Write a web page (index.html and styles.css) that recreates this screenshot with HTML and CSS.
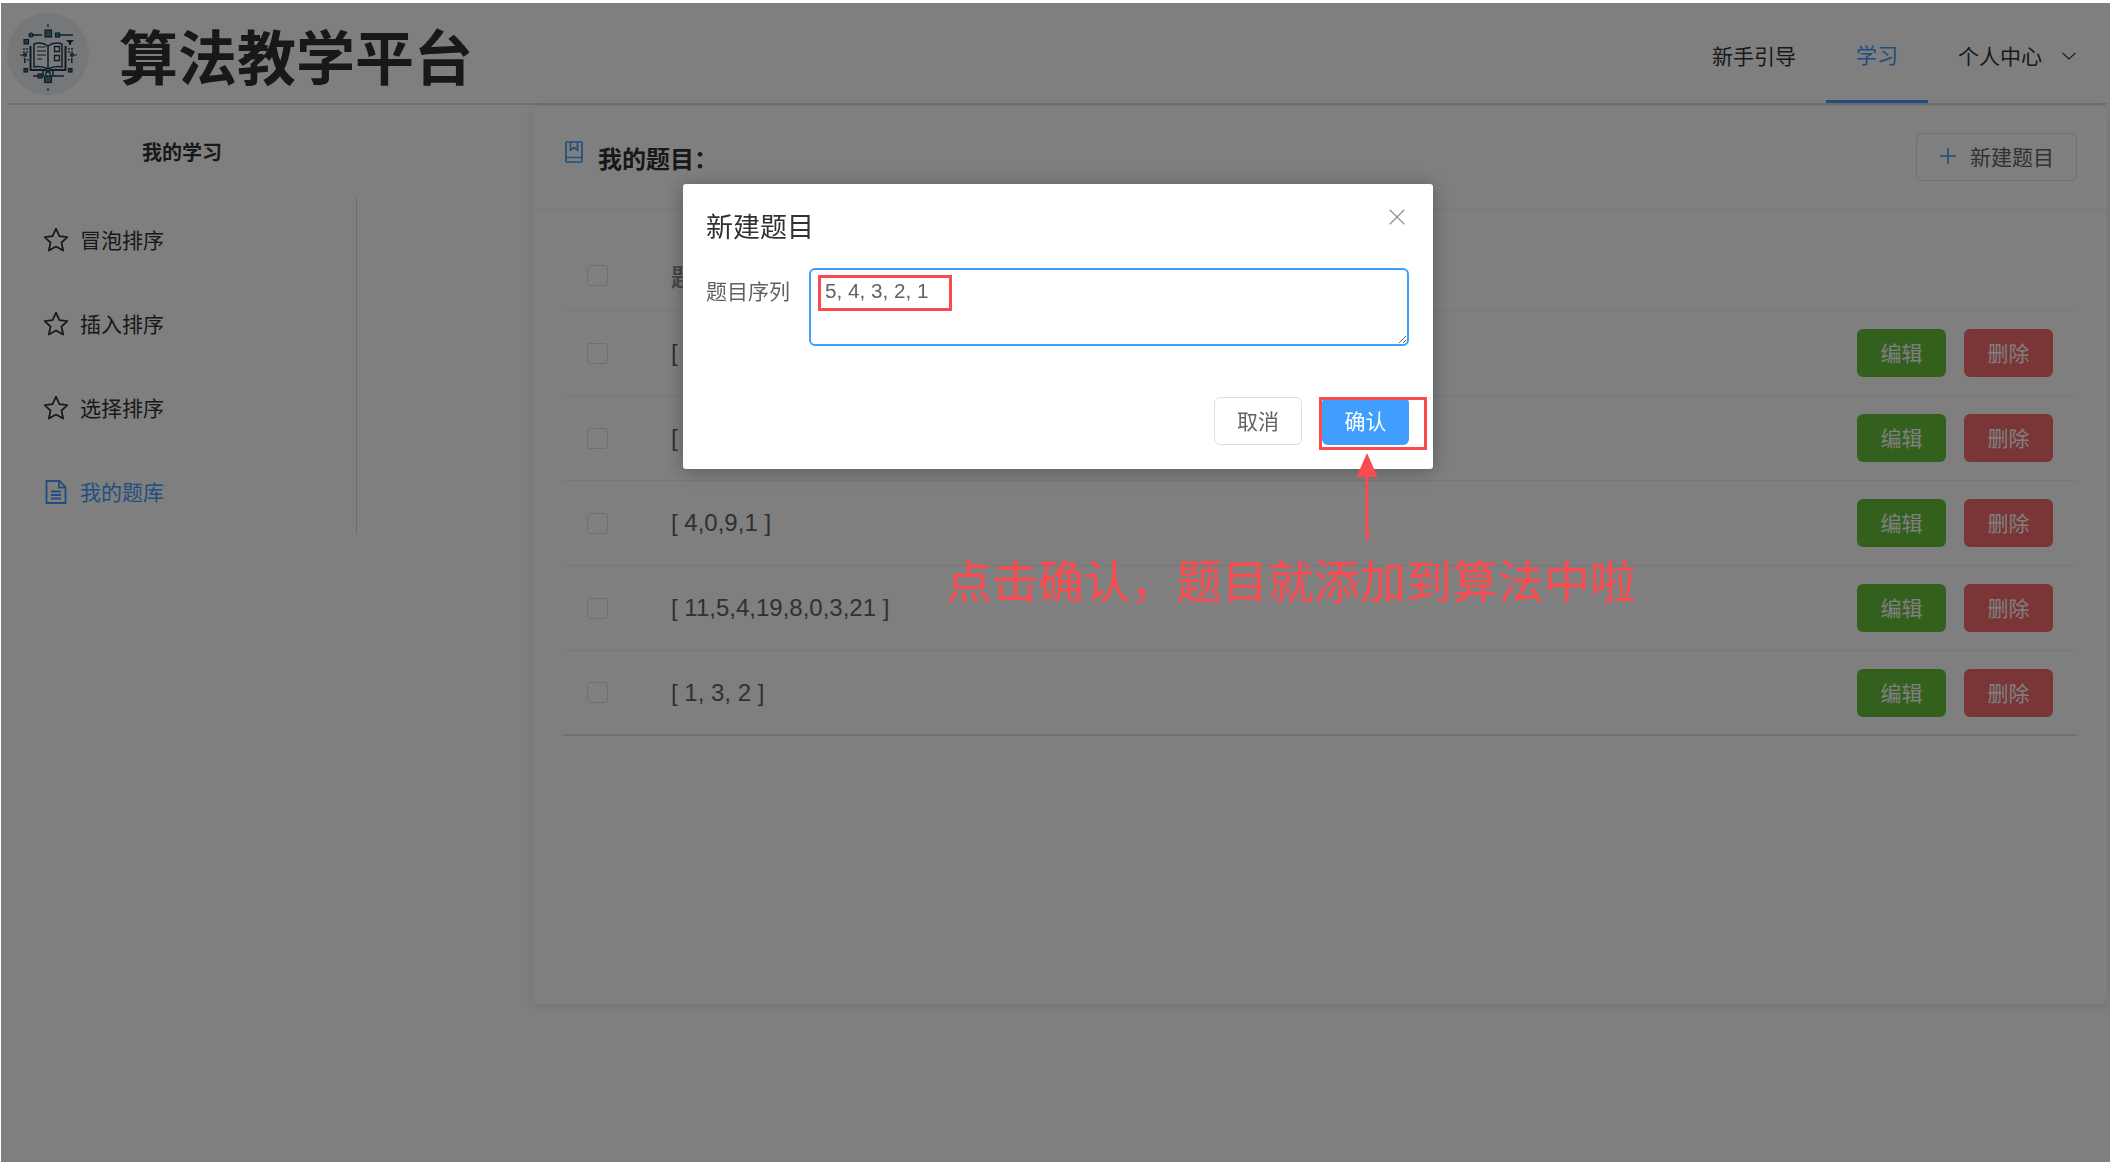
FILE: index.html
```html
<!DOCTYPE html>
<html lang="zh">
<head>
<meta charset="utf-8">
<title>算法教学平台</title>
<link rel="stylesheet" href="styles.css">
</head>
<body>
<div class="page">
  <header class="topbar">
    <div class="brand">
      <div class="logo">
        <svg viewBox="0 0 82 82" width="82" height="82" fill="none">
          <g stroke="#1c3a4c" stroke-width="1.5">
            <path d="M27 31c5-2 10-1 14 2 4-3 9-4 14-2v23c-5-1-10 0-14 2-4-2-9-3-14-2z" fill="#f4f6f7"/>
            <path d="M41 33v23"/>
            <path d="M23.500 33v24h14.500l3 1.500 3-1.500h14.500V33" stroke-width="2"/>
            <path d="M30 34h9M30 38h9M30 42h9M30 46h5" stroke-width="1.200"/>
            <path d="M47.500 33.500h5v5h-5zM47.500 42.500h5v5h-5z" stroke-width="1.300"/>
            <path d="M36 58v5h-10M46 58v5h11M26 22h9M53 22h13"/>
            <path d="M41 11v3M41 75v3M18 35h0M13 42h3M67 42h3" stroke-width="1.200"/>
          </g>
          <g fill="#3a7f9f" stroke="#1c3a4c" stroke-width="1.200">
            <rect x="38" y="17" width="6.500" height="7"/>
            <rect x="17" y="26.500" width="4.500" height="4.500"/>
            <rect x="48.500" y="20" width="4" height="4"/>
            <rect x="37.500" y="63" width="7" height="6.500"/>
            <rect x="31" y="61" width="4" height="4"/>
            <circle cx="24" cy="22" r="2"/>
            <rect x="17" y="55.500" width="3.500" height="3.500"/>
            <rect x="61.500" y="55.500" width="3.500" height="3.500"/>
            <circle cx="18" cy="42" r="1.500"/>
            <circle cx="65" cy="42" r="1.500"/>
          </g>
          <path d="M59 27h8l-3 3v2h-2v-2z" fill="#1c3a4c"/>
          <path d="M38.800 63v-2a2.200 2.200 0 0 1 4.400 0v2" stroke="#1c3a4c" stroke-width="1.200" fill="none"/>
          <g fill="#1c3a4c">
            <circle cx="17" cy="36" r=".9"/><circle cx="20" cy="36" r=".9"/><circle cx="17" cy="39" r=".9"/><circle cx="20" cy="39" r=".9"/>
            <circle cx="62" cy="36" r=".9"/><circle cx="65" cy="36" r=".9"/><circle cx="62" cy="39" r=".9"/><circle cx="65" cy="39" r=".9"/>
            <rect x="17" y="45" width="1.500" height="5"/><rect x="20" y="46" width="1.500" height="1.500"/>
            <rect x="64" y="45" width="1.500" height="5"/><rect x="61" y="46" width="1.500" height="1.500"/>
          </g>
        </svg>
      </div>
      <h1 class="site-title">算法教学平台</h1>
    </div>
    <nav class="nav">
      <a class="nav-item">新手引导</a>
      <a class="nav-item nav-active">学习</a>
      <a class="nav-item nav-user">个人中心
        <svg class="chevron" viewBox="0 0 14 8" width="14" height="8" fill="none"><path d="M.5.8 7 7 13.500.8" stroke="#2a2a2a" stroke-width="1.100"/></svg>
      </a>
    </nav>
  </header>

  <div class="content">
    <aside class="sidebar">
      <h2 class="side-title">我的学习</h2>
      <ul class="menu">
        <li class="menu-item">
          <svg class="menu-icon" viewBox="1 1 22 22" width="24" height="24" fill="none"><path d="M12 1.600l3.100 6.900 7.500.8-5.600 5 1.600 7.400-6.600-3.800-6.600 3.800L7 14.300l-5.600-5 7.500-.8z" stroke="currentColor" stroke-width="1.600" stroke-linejoin="round"/></svg>
          冒泡排序
        </li>
        <li class="menu-item">
          <svg class="menu-icon" viewBox="1 1 22 22" width="24" height="24" fill="none"><path d="M12 1.600l3.100 6.900 7.500.8-5.600 5 1.600 7.400-6.600-3.800-6.600 3.800L7 14.300l-5.600-5 7.500-.8z" stroke="currentColor" stroke-width="1.600" stroke-linejoin="round"/></svg>
          插入排序
        </li>
        <li class="menu-item">
          <svg class="menu-icon" viewBox="1 1 22 22" width="24" height="24" fill="none"><path d="M12 1.600l3.100 6.900 7.500.8-5.600 5 1.600 7.400-6.600-3.800-6.600 3.800L7 14.300l-5.600-5 7.500-.8z" stroke="currentColor" stroke-width="1.600" stroke-linejoin="round"/></svg>
          选择排序
        </li>
        <li class="menu-item menu-active">
          <svg class="menu-icon" viewBox="0 0 24 24" width="24" height="24" fill="none"><path d="M2.500 1h13l6 6v16h-19zM15 1v6.500h6.500M7 11.500h10M7 15h10M7 18.500h10" stroke="currentColor" stroke-width="1.800"/></svg>
          我的题库
        </li>
      </ul>
    </aside>

    <main class="card">
      <div class="card-head">
        <div class="card-title">
          <svg class="book-icon" viewBox="0 0 18 22" width="18" height="22" fill="none"><path d="M2 1h14a1 1 0 0 1 1 1v18a1 1 0 0 1-1 1H2a1 1 0 0 1-1-1V2a1 1 0 0 1 1-1zM5.500 1v8l3.500-2.500 3.500 2.500V1M1 16.500h16" stroke="#409eff" stroke-width="1.700"/></svg>
          <span>我的题目：</span>
        </div>
        <button class="btn btn-new"><svg viewBox="0 0 18 18" width="18" height="18" fill="none"><path d="M9 1v16M1 9h16" stroke="#409eff" stroke-width="1.600"/></svg>新建题目</button>
      </div>
      <div class="table">
        <div class="row row-head"><span class="check"></span><span class="cell">题</span></div>
        <div class="row"><span class="check"></span><span class="cell">[</span><div class="ops"><button class="btn btn-edit">编辑</button><button class="btn btn-del">删除</button></div></div>
        <div class="row"><span class="check"></span><span class="cell">[</span><div class="ops"><button class="btn btn-edit">编辑</button><button class="btn btn-del">删除</button></div></div>
        <div class="row"><span class="check"></span><span class="cell">[ 4,0,9,1 ]</span><div class="ops"><button class="btn btn-edit">编辑</button><button class="btn btn-del">删除</button></div></div>
        <div class="row"><span class="check"></span><span class="cell">[ 11,5,4,19,8,0,3,21 ]</span><div class="ops"><button class="btn btn-edit">编辑</button><button class="btn btn-del">删除</button></div></div>
        <div class="row row-last"><span class="check"></span><span class="cell">[ 1, 3, 2 ]</span><div class="ops"><button class="btn btn-edit">编辑</button><button class="btn btn-del">删除</button></div></div>
      </div>
    </main>
  </div>
</div>

<div class="overlay"></div>

<section class="dialog">
  <header class="dialog-head">
    <span class="dialog-title">新建题目</span>
    <svg class="dialog-close" viewBox="0 0 16 16" width="16" height="16" fill="none"><path d="M.7.700l14.600 14.600M15.300.700.700 15.300" stroke="#909399" stroke-width="1.300"/></svg>
  </header>
  <div class="form-row">
    <label class="form-label">题目序列</label>
    <textarea class="form-input">5, 4, 3, 2, 1</textarea>
  </div>
  <footer class="dialog-foot">
    <button class="btn btn-cancel">取消</button>
    <button class="btn btn-ok">确认</button>
  </footer>
</section>

<div class="mark mark-input"></div>
<div class="mark mark-ok"></div>
<svg class="arrow" viewBox="0 0 22 90" width="22" height="90"><path d="M11 0 21.500 24H12.500V87H9.500V24H.5z" fill="#fb4b4f"/></svg>
<div class="note">点击确认，题目就添加到算法中啦</div>
</body>
</html>
```
FILE: styles.css
```css
* { box-sizing: border-box; }
html, body { margin: 0; height: 100%; }
body {
  background: #fff;
  font-family: "Noto Sans CJK SC", "Liberation Sans", sans-serif;
  color: #303133;
  overflow: hidden;
}
.page { height: 1162px; padding: 3px 3px 0 1px; }

.topbar {
  height: 102px;
  display: flex;
  justify-content: space-between;
  border-bottom: 2px solid #dcdfe6;
  margin-left: 6px;
}
.brand { display: flex; align-items: center; }
.logo {
  width: 82px;
  height: 82px;
  border-radius: 50%;
  background: #eceff0;
  margin-top: 2px;
}
.logo svg { display: block; }
.site-title {
  margin: 3px 0 0 30px;
  font-size: 59px;
  line-height: 1;
  font-weight: 700;
  color: #303133;
}
.nav { display: flex; align-self: stretch; }
.nav-item {
  display: flex;
  align-items: center;
  padding: 2px 30px 0;
  font-size: 21px;
  height: 102px;
  color: #303133;
}
.nav-active { color: #409eff; border-bottom: 3px solid #409eff; margin-bottom: -2px; padding-top: 5px; height: 100px; }
.nav-user { padding-right: 31px; }
.chevron { margin-left: 20px; margin-top: 2px; }

.content { display: flex; align-items: flex-start; }
.sidebar { width: 532px; flex: none; padding-left: 1px; }
.side-title {
  margin: 0;
  width: 360px;
  height: 93px;
  font-size: 20px;
  line-height: 93px;
  text-align: center;
  font-weight: 700;
}
.menu {
  list-style: none;
  margin: 0;
  padding: 0;
  width: 355px;
  border-right: 1px solid #d8dadf;
}
.menu-item {
  height: 84px;
  display: flex;
  align-items: center;
  padding: 0 0 3px 42px;
  font-size: 21px;
  color: #303133;
}
.menu-icon { margin: 3px 12px 0 0; flex: none; }
.menu-active { color: #409eff; }

.card {
  width: 1574px;
  height: 897px;
  margin-top: 2px;
  background: #fff;
  border-radius: 6px;
  box-shadow: 0 2px 12px rgba(0,0,0,.12);
}
.card-head {
  height: 103px;
  padding: 26px 30px 0 32px;
  display: flex;
  justify-content: space-between;
  border-bottom: 1px solid #ebeef5;
}
.card-title {
  display: flex;
  align-items: center;
  height: 48px;
  font-size: 24px;
  font-weight: 700;
}
.book-icon { margin-right: 15px; margin-top: -10px; }

.btn {
  height: 48px;
  font-family: inherit;
  font-size: 21px;
  border-radius: 6px;
  border: 1px solid transparent;
  padding: 0 0 2px;
  color: #fff;
}
.btn-new {
  width: 161px;
  display: flex;
  align-items: center;
  justify-content: center;
  gap: 13px;
  background: #fff;
  border-color: #dcdfe6;
  color: #606266;
}
.table { padding: 0 30px; }
.row {
  height: 85px;
  display: flex;
  align-items: center;
  border-bottom: 1px solid #ebeef5;
  padding: 0 24px;
  font-family: "Liberation Sans", "Noto Sans CJK SC", sans-serif;
  font-size: 24px;
  color: #606266;
}
.row-head { height: 101px; padding-top: 31px; font-weight: 700; color: #909399; }
.row-last { border-bottom: 2px solid #e1e3ea; }
.check {
  width: 21px;
  height: 21px;
  flex: none;
  margin-right: 63px;
  border: 1px solid #dcdfe6;
  border-radius: 3px;
  background: #fff;
}
.cell { flex: 1; }
.ops { display: flex; gap: 18px; }
.btn-edit { width: 89px; background: #67c23a; color: #fff; }
.btn-del { width: 89px; background: #f56c6c; color: #fff; }

.overlay {
  position: fixed;
  left: 1px; top: 3px; right: 0; bottom: 0;
  background: rgba(0,0,0,.5);
}
.dialog {
  position: fixed;
  left: 683px;
  top: 184px;
  width: 750px;
  height: 285px;
  background: #fff;
  border-radius: 3px;
  box-shadow: 0 2px 20px rgba(0,0,0,.3);
  padding: 0 24px 0 23px;
}
.dialog-head {
  height: 84px;
  display: flex;
  justify-content: space-between;
  padding-top: 22px;
}
.dialog-title { font-size: 27px; line-height: 40px; color: #303133; }
.dialog-close { margin: 3px 4px 0 0; }
.form-row { display: flex; }
.form-label { width: 103px; flex: none; font-size: 21px; line-height: 45px; color: #606266; }
.form-input {
  width: 600px;
  height: 78px;
  display: block;
  padding: 5px 14px;
  font-family: "Liberation Sans", sans-serif;
  font-size: 20.700px;
  line-height: 32px;
  color: #606266;
  border: 2px solid #409eff;
  border-radius: 6px;
  outline: none;
  resize: vertical;
}
.dialog-foot {
  display: flex;
  justify-content: flex-end;
  gap: 20px;
  margin-top: 51px;
}
.btn-cancel { width: 88px; padding-bottom: 3px; background: #fff; border-color: #dcdfe6; color: #606266; }
.btn-ok { width: 87px; padding-bottom: 3px; background: #409eff; color: #fff; }

.mark { position: fixed; border: 3px solid #fb4b4f; }
.mark-input { left: 818px; top: 275px; width: 134px; height: 36px; }
.mark-ok { left: 1319px; top: 397px; width: 108px; height: 53px; }
.arrow { position: fixed; left: 1356px; top: 453px; }
.note {
  position: fixed;
  left: 946px;
  top: 544px;
  font-size: 46px;
  line-height: 68px;
  color: #fb4b4f;
  white-space: nowrap;
}
```
